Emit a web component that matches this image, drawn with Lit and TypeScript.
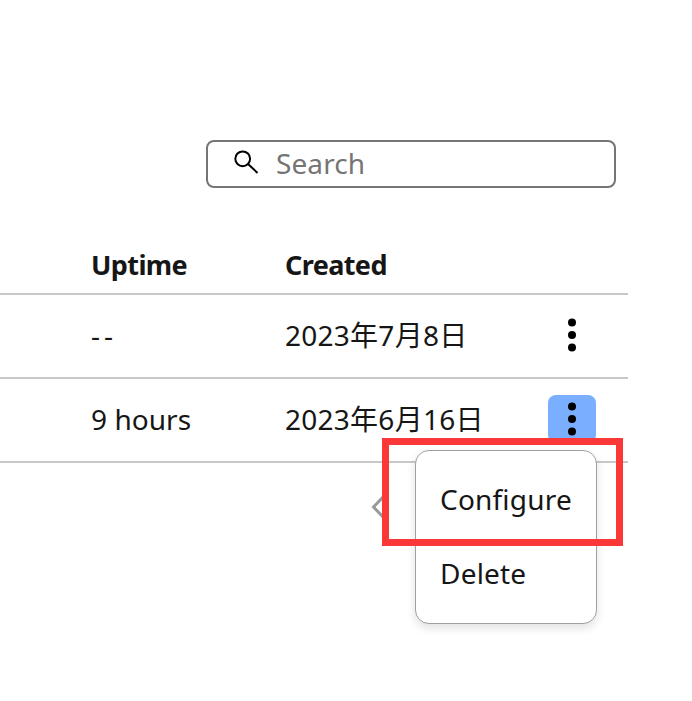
import { LitElement, html, css, svg } from "lit";
import { customElement } from "lit/decorators.js";

const kebab = html`<svg class="kebab" width="8" height="34" viewBox="0 0 8 34">
  ${[4.5, 17, 29.5].map((y) => svg`<circle cx="4" cy=${y} r="4" fill="#000"></circle>`)}
</svg>`;

@customElement("app-root")
export class AppRoot extends LitElement {
  static styles = css`
    :host {
      display: block;
      position: relative;
      box-sizing: border-box;
      width: 692px;
      height: 701px;
      padding: 140px 64px 0 0;
      overflow: hidden;
      background: #fff;
      color: #161616;
      font: 28px/38px "Noto Sans", "Noto Sans CJK SC", sans-serif;
    }
    .search {
      box-sizing: border-box;
      display: flex;
      align-items: center;
      width: 410px;
      height: 48px;
      margin: 0 12px 0 auto;
      padding: 0 0 2px 25px;
      border: 2px solid #757575;
      border-radius: 8px;
      color: #757575;
    }
    .search svg {
      margin-right: 16px;
    }
    .row {
      box-sizing: border-box;
      display: grid;
      grid-template-columns: 194px 263px 48px;
      align-items: center;
      height: 84px;
      padding: 0 0 2px 91px;
      border-bottom: 2px solid #c8c8c8;
    }
    .head {
      height: 107px;
      padding-top: 50px;
      font-weight: 700;
    }
    .t-search { letter-spacing: 0.1px; }
    .t-head { font-size: 27px; letter-spacing: -0.6px; }
    .t-dash { letter-spacing: 4px; }
    .t-date { letter-spacing: 0.26px; }
    .t-hours { letter-spacing: 0.05px; }
    .t-conf { letter-spacing: 0.2px; }
    .t-del { letter-spacing: 0.2px; }
    .more {
      display: flex;
      align-items: center;
      justify-content: center;
      width: 48px;
      height: 48px;
      border-radius: 8px;
    }
    .on {
      background: #7aafff;
    }
    .prev {
      position: absolute;
      left: 369px;
      top: 494px;
    }
    .menu {
      position: absolute;
      box-sizing: border-box;
      left: 415px;
      top: 450px;
      width: 182px;
      height: 174px;
      padding: 11px 0 0 24px;
      border: 1px solid #a0a0a0;
      border-radius: 14px;
      background: #fff;
      box-shadow: 0 4px 10px rgba(0, 0, 0, 0.12);
    }
    .item {
      display: flex;
      align-items: center;
      height: 74px;
    }
    .mark {
      position: absolute;
      box-sizing: border-box;
      left: 382px;
      top: 438px;
      width: 241px;
      height: 108px;
      border: 7px solid #fb3838;
    }
  `;

  render() {
    return html`
      <div class="search">
        <svg width="27" height="27" viewBox="0 0 27 27" fill="none" stroke="#000" stroke-width="2">
          <circle cx="9.7" cy="8.8" r="7.4"></circle>
          <path d="M15 14l9.5 8.9"></path>
        </svg>
        <span class="t-search">Search</span>
      </div>
      <div class="row head">
        <span class="t-head">Uptime</span><span class="t-head">Created</span>
      </div>
      <div class="row">
        <span class="t-dash">--</span><span class="t-date">2023年7月8日</span>
        <span class="more">${kebab}</span>
      </div>
      <div class="row">
        <span class="t-hours">9 hours</span><span class="t-date">2023年6月16日</span>
        <span class="more on">${kebab}</span>
      </div>
      <svg class="prev" width="14" height="26" viewBox="0 0 14 26" fill="none" stroke="#999" stroke-width="3">
        <path d="M14 3L4.5 13l9.5 10"></path>
      </svg>
      <div class="menu">
        <div class="item"><span class="t-conf">Configure</span></div>
        <div class="item"><span class="t-del">Delete</span></div>
      </div>
      <div class="mark"></div>
    `;
  }
}
